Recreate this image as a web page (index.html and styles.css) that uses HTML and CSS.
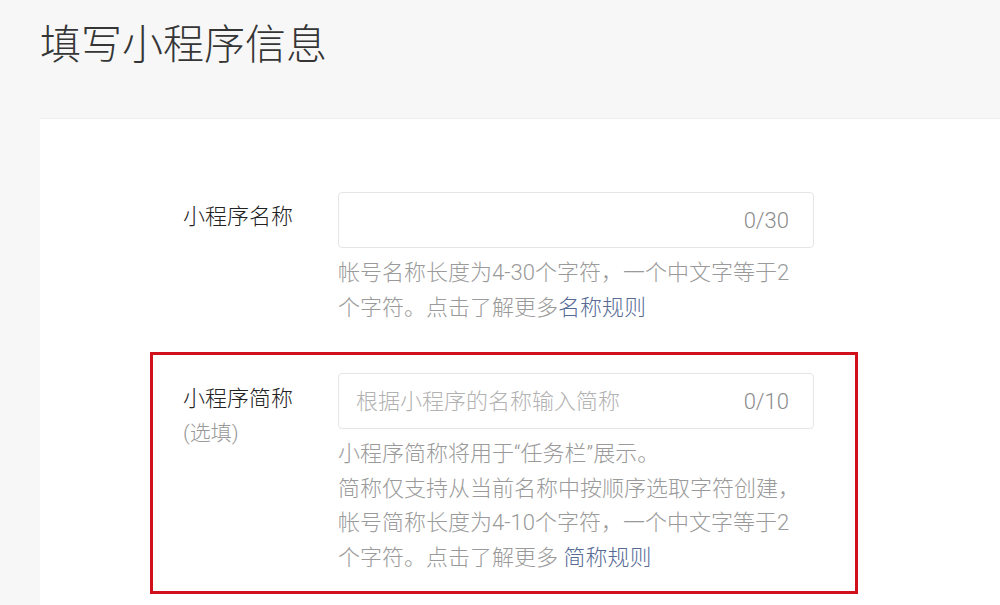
FILE: index.html
```html
<!DOCTYPE html>
<html>
  <head>
    <meta charset="utf-8" />
    <title>填写小程序信息</title>
    <link rel="stylesheet" href="styles.css">
  </head>
  <body>
    <h1 class="page-title">填写小程序信息</h1>
    <div class="card">
      <div class="form-list">
        <!-- 名称 -->
        <div class="form-row">
          <div class="form-label">小程序名称</div>
          <div class="form-field">
            <div class="input-box">
              <input type="text" name="name" />
              <span class="counter">0/30</span>
            </div>
            <p class="hint">
              帐号名称长度为4-30个字符，一个中文字等于2<br />个字符。点击了解更多<a href="#">名称规则</a>
            </p>
          </div>
        </div>

        <!-- 简称 -->
        <div class="form-row highlight">
          <div class="form-label">
            小程序简称
            <span class="optional">(选填)</span>
          </div>
          <div class="form-field">
            <div class="input-box">
              <input type="text" name="short_name" placeholder="根据小程序的名称输入简称" />
              <span class="counter">0/10</span>
            </div>
            <p class="hint">
              小程序简称将用于“任务栏”展示。<br />简称仅支持从当前名称中按顺序选取字符创建，<br />帐号简称长度为4-10个字符，一个中文字等于2<br />个字符。点击了解更多 <a href="#">简称规则</a>
            </p>
          </div>
        </div>
      </div>
    </div>
  </body>
</html>
```

FILE: styles.css
```css
body {
  margin: 0;
  background: #f7f7f7;
  font-family: Roboto, "Noto Sans CJK SC", sans-serif;
  font-weight: 300;
  color: #353535;
  overflow: hidden;
}
.page-title {
  margin: 0;
  padding: 17px 40px 0;
  font-size: 41px;
  font-weight: 300;
  line-height: 56px;
  color: #353535;
}
.card {
  margin: 45px 0 0 40px;
  padding-top: 73px;
  min-height: 600px;
  background: #fff;
  border-top: 1px solid #efefef;
}
.form-list {
  padding-left: 110px;
}
.form-row {
  display: flex;
  width: 708px;
  padding-left: 33px;
  box-sizing: border-box;
  margin-bottom: 27px;
}
.form-row.highlight {
  border: 3px solid #d0101b;
  padding: 18px 0 16px 30px;
}
.form-label {
  width: 155px;
  flex-shrink: 0;
  padding-top: 8px;
  font-size: 22px;
  line-height: 34px;
  color: #222;
}
.highlight .form-label {
  padding-top: 9px;
}
.optional {
  display: block;
  font-size: 21px;
  color: #999;
}
.form-field {
  width: 476px;
}
.input-box {
  display: flex;
  align-items: center;
  height: 56px;
  padding: 0 24px 0 17px;
  border: 1px solid #e5e5e5;
  border-radius: 4px;
  box-sizing: border-box;
}
.input-box input {
  flex: 1;
  min-width: 0;
  border: none;
  outline: none;
  padding: 0;
  font-family: inherit;
  font-weight: 300;
  font-size: 22px;
  color: #353535;
  background: transparent;
}
.input-box input::placeholder {
  color: #b2b2b2;
}
.counter {
  font-size: 22px;
  color: #8c8c8c;
}
.hint {
  margin: 8px 0 0;
  font-size: 22px;
  line-height: 34.5px;
  color: #9a9a9a;
}
.hint a {
  color: #576b95;
  text-decoration: none;
}
```
